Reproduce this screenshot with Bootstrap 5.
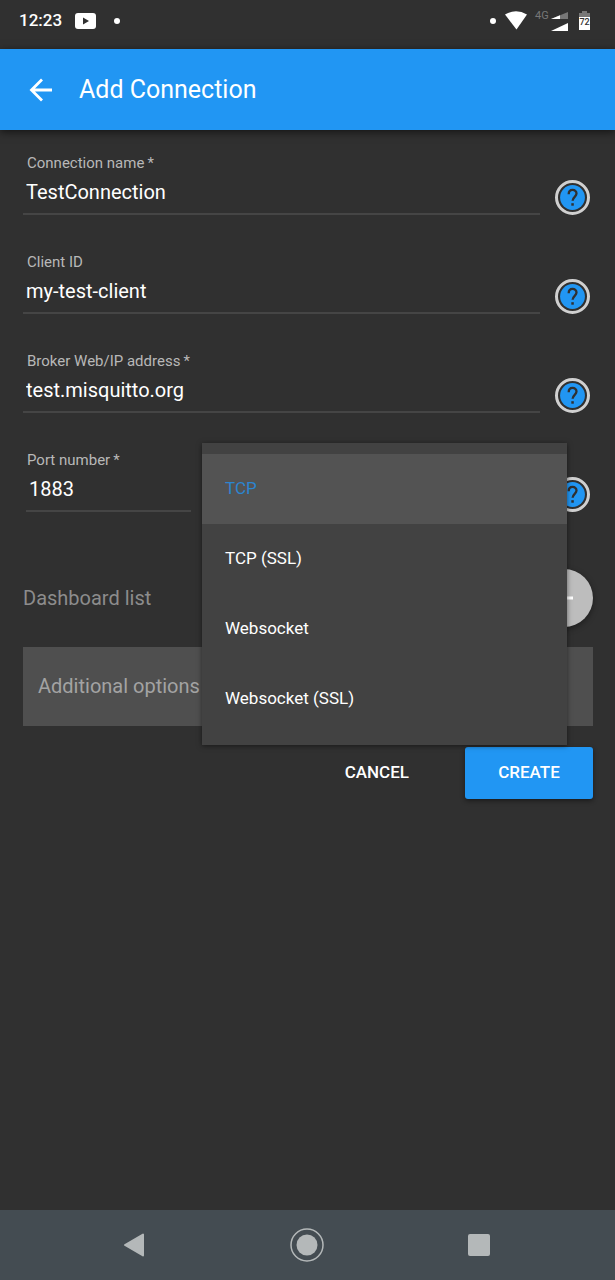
<!DOCTYPE html>
<html lang="en">
<head>
<meta charset="utf-8">
<meta name="viewport" content="width=device-width, initial-scale=1">
<title>Add Connection</title>
<link href="https://cdn.jsdelivr.net/npm/bootstrap@5.3.0/dist/css/bootstrap.min.css" rel="stylesheet">
<style>
body { background: #303030; color: #fff; font-family: Roboto, "Noto Sans", sans-serif; }
svg { display: block; flex: none; }
.status-bar { height: 49px; padding: 0 23px 7px 19px; font-size: 17px; font-weight: 500; }
.video-icon { margin: 0 14px 0 8px; }
.dot-mark { width: 6px; height: 6px; background: #fff; }
.app-bar { height: 81px; padding: 0 27px; gap: 25px; background: #2196f3; box-shadow: 0 2px 8px rgba(0,0,0,.6); z-index: 1; }
.app-bar h1 { font-size: 25px; font-weight: 400; line-height: 32px; }
.page-form { padding: 23px 22px 0 23px; }
.field-row { gap: 15px; margin-bottom: 37px; }
.field-label { display: block; font-size: 15px; line-height: 20px; padding-left: 4px; color: #b8b8b8; }
.field-input { height: 42px; padding: 0 3px 2px; font-size: 20px; color: #fff; background: transparent; border: 0; border-bottom: 2px solid #454545; border-radius: 0; }
.field-input:focus { color: #fff; background: transparent; box-shadow: none; border-color: #2196f3; }
.help-btn { width: 35px; height: 35px; margin-right: 3px; }
.port-row { gap: 11px; padding-left: 3px; margin-bottom: 57px; }
.port-field { width: 165px; }
.port-field .field-label { padding-left: 1px; }
.protocol-menu { top: -7px; left: 0; right: -27px; padding: 11px 0; background: #424242; z-index: 5; box-shadow: 0 1px 5px rgba(0,0,0,.5); }
.protocol-menu button { height: 70px; padding: 0 23px; font-size: 17px; color: #fff; background: transparent; border: 0; }
.protocol-menu button.chosen { background: #535353; color: #2b85d0; }
.dash-row { margin-bottom: 20px; font-size: 20px; color: #8c8c8c; }
.add-btn { width: 58px; height: 58px; background: #bdbdbd; box-shadow: 0 2px 6px rgba(0,0,0,.4); }
.options-panel { height: 79px; padding: 0 15px 2px; margin-bottom: 21px; font-size: 20px; color: #a3a3a3; background: #4f4f4f; }
.action-btn { height: 52px; border-radius: 3px; padding: 0 32px; font-size: 17px; font-weight: 500; color: #fff; }
.create-btn { width: 128px; background: #2196f3; box-shadow: 0 2px 5px rgba(0,0,0,.45); }
.create-btn:hover, .add-btn:hover { background: #42a5f5; color: #fff; }
.system-nav { height: 70px; background: #444c52; padding: 0 125px 0 123px; }
</style>
</head>
<body>
<svg class="d-none" aria-hidden="true">
  <symbol id="help" viewBox="0 0 35 35">
    <circle cx="17.5" cy="17.5" r="16" fill="none" stroke="#d0d0d0" stroke-width="3"/>
    <circle cx="17.5" cy="17.5" r="12.4" fill="#2196f3"/>
    <path d="M13.700 14.200c0-5.800 7.800-5.400 7.800-.6 0 3.100-3.900 3.400-3.900 7.200" fill="none" stroke="#303030" stroke-width="2.300"/>
    <path d="M16.300 23.200h2.500v2.500h-2.500z" fill="#303030"/>
  </symbol>
</svg>
<div class="min-vh-100 d-flex flex-column">
  <div class="status-bar d-flex align-items-center justify-content-between">
    <div class="d-flex align-items-center">
      <span>12:23</span>
      <svg class="video-icon" width="30" height="16" viewBox="0 0 30 16"><rect x="5" width="21" height="16" rx="3" fill="#fff"/><path d="M13 4.500v7l6-3.500z" fill="#303030"/></svg>
      <span class="dot-mark rounded-circle"></span>
    </div>
    <div class="d-flex align-items-center">
      <span class="dot-mark rounded-circle"></span>
      <svg width="96" height="24" viewBox="0 0 96 24">
        <path d="M9 5.500Q20-1 31 5.500L20.500 20.500z" fill="#fff"/>
        <text x="39" y="10" font-size="11" font-weight="400" fill="#777">4G</text>
        <path d="M55 10L72 3v7z" fill="#777"/><path d="M55 10L64 6.300V10z" fill="#fff"/>
        <path d="M55 22L72 14v8z" fill="#fff"/>
        <path d="M83 9V4h3V2h5v2h3v5z" fill="#777"/><path d="M83 8h11v13H83z" fill="#fff"/>
        <text x="88.500" y="16" text-anchor="middle" font-size="9" font-weight="500" fill="#303030">72</text>
      </svg>
    </div>
  </div>
  <header class="app-bar d-flex align-items-center">
    <button class="btn p-0 border-0" type="button" aria-label="Back">
      <svg width="27" height="26" viewBox="0 0 27 26" fill="none" stroke="#fff" stroke-width="2.800"><path d="M25 13H5M15 2.500L4.500 13 15 23.500"/></svg>
    </button>
    <h1 class="m-0">Add Connection</h1>
  </header>
  <main class="flex-grow-1">
    <form class="page-form">
      <div class="field-row d-flex align-items-end">
        <div class="flex-grow-1">
          <label class="field-label" for="name">Connection name&thinsp;*</label>
          <input class="field-input form-control" id="name" type="text" value="TestConnection">
        </div>
        <button class="help-btn btn p-0 border-0" type="button" aria-label="Help"><svg width="35" height="35"><use href="#help"/></svg></button>
      </div>
      <div class="field-row d-flex align-items-end">
        <div class="flex-grow-1">
          <label class="field-label" for="client">Client ID</label>
          <input class="field-input form-control" id="client" type="text" value="my-test-client">
        </div>
        <button class="help-btn btn p-0 border-0" type="button" aria-label="Help"><svg width="35" height="35"><use href="#help"/></svg></button>
      </div>
      <div class="field-row d-flex align-items-end">
        <div class="flex-grow-1">
          <label class="field-label" for="broker">Broker Web/IP address&thinsp;*</label>
          <input class="field-input form-control" id="broker" type="text" value="test.misquitto.org">
        </div>
        <button class="help-btn btn p-0 border-0" type="button" aria-label="Help"><svg width="35" height="35"><use href="#help"/></svg></button>
      </div>
      <div class="field-row port-row d-flex align-items-end">
        <div class="port-field">
          <label class="field-label" for="port">Port number&thinsp;*</label>
          <input class="field-input form-control" id="port" type="text" inputmode="numeric" value="1883">
        </div>
        <div class="flex-grow-1 align-self-stretch position-relative me-1">
          <div class="protocol-menu position-absolute d-flex flex-column" role="listbox" aria-label="Protocol">
            <button class="chosen text-start" type="button" role="option" aria-selected="true">TCP</button>
            <button class="text-start" type="button" role="option" aria-selected="false">TCP (SSL)</button>
            <button class="text-start" type="button" role="option" aria-selected="false">Websocket</button>
            <button class="text-start" type="button" role="option" aria-selected="false">Websocket (SSL)</button>
          </div>
        </div>
        <button class="help-btn btn p-0 border-0" type="button" aria-label="Help"><svg width="35" height="35"><use href="#help"/></svg></button>
      </div>
      <div class="dash-row d-flex align-items-center justify-content-between">
        <span>Dashboard list</span>
        <button class="add-btn btn p-0 border-0 rounded-circle d-flex align-items-center justify-content-center" type="button" aria-label="Add dashboard">
          <svg width="18" height="18" viewBox="0 0 18 18" stroke="#fff" stroke-width="3"><path d="M0 9h18M9 0v18"/></svg>
        </button>
      </div>
      <button class="options-panel w-100 border-0 d-flex align-items-center" type="button">Additional options</button>
      <div class="d-flex justify-content-end gap-4">
        <button class="action-btn btn border-0" type="button">CANCEL</button>
        <button class="action-btn create-btn btn border-0" type="submit">CREATE</button>
      </div>
    </form>
  </main>
  <nav class="system-nav d-flex align-items-center justify-content-between" aria-label="System">
    <button class="btn p-0 border-0" type="button" aria-label="Back"><svg width="22" height="24" viewBox="0 0 22 24"><path d="M2 12L20 1.500v21z" fill="#b4b8b9" stroke="#b4b8b9" stroke-width="2" stroke-linejoin="round"/></svg></button>
    <button class="btn p-0 border-0" type="button" aria-label="Home"><svg width="34" height="34" viewBox="0 0 34 34"><circle cx="17" cy="17" r="16" fill="none" stroke="#b4b8b9" stroke-width="1.500"/><circle cx="17" cy="17" r="10.500" fill="#b4b8b9"/></svg></button>
    <button class="btn p-0 border-0" type="button" aria-label="Recent apps"><svg width="22" height="22" viewBox="0 0 22 22"><rect width="22" height="22" rx="2" fill="#b4b8b9"/></svg></button>
  </nav>
</div>
<script src="https://cdn.jsdelivr.net/npm/bootstrap@5.3.0/dist/js/bootstrap.bundle.min.js"></script>
</body>
</html>
